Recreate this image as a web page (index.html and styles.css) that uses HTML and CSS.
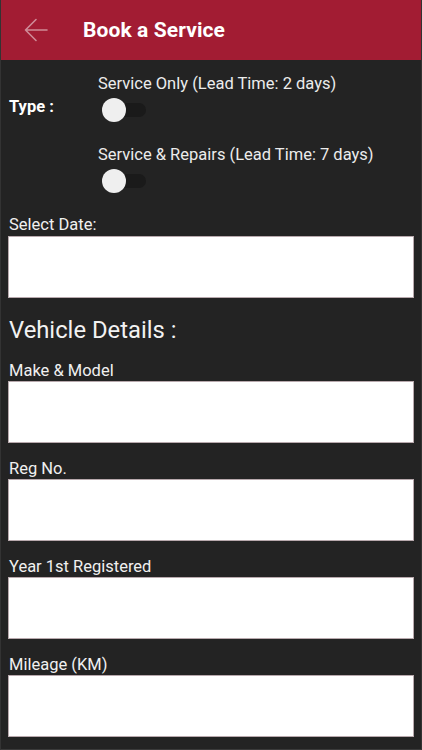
FILE: index.html
```html
<!DOCTYPE html>
<html lang="en">
<head>
<meta charset="utf-8">
<title>Book a Service</title>
<link rel="stylesheet" href="styles.css">
</head>
<body>
<div class="app">
  <header class="topbar">
    <svg class="back" width="24" height="24" viewBox="0 0 24 24" aria-hidden="true">
      <path d="M23 12H1.5M12 1.5L1.5 12L12 22.5" fill="none" stroke="currentColor" stroke-width="1.6" stroke-linecap="round" stroke-linejoin="round"/>
    </svg>
    <h1 class="title">Book a Service</h1>
  </header>

  <main class="content">
    <section class="type-row">
      <div class="type-label">Type :</div>
      <div class="options">
        <div class="option">
          <div class="option-text">Service Only (Lead Time: 2 days)</div>
          <div class="switch"><span class="track"></span><span class="thumb"></span></div>
        </div>
        <div class="option">
          <div class="option-text">Service &amp; Repairs (Lead Time: 7 days)</div>
          <div class="switch"><span class="track"></span><span class="thumb"></span></div>
        </div>
      </div>
    </section>

    <div class="field first">
      <label class="label">Select Date:</label>
      <div class="input"></div>
    </div>

    <h2 class="section-title">Vehicle Details :</h2>

    <div class="field">
      <label class="label">Make &amp; Model</label>
      <div class="input"></div>
    </div>
    <div class="field">
      <label class="label">Reg No.</label>
      <div class="input"></div>
    </div>
    <div class="field">
      <label class="label">Year 1st Registered</label>
      <div class="input"></div>
    </div>
    <div class="field">
      <label class="label">Mileage (KM)</label>
      <div class="input"></div>
    </div>
  </main>
</div>
</body>
</html>
```

FILE: styles.css
```css
html, body {
  margin: 0;
  padding: 0;
  background: #232323;
}

body {
  font-family: Roboto, "Liberation Sans", Arial, sans-serif;
  color: #f2f2f2;
}

.app {
  width: 422px;
  height: 750px;
  overflow: hidden;
  box-sizing: border-box;
  background: #232323;
  border-left: 1px solid #333333;
  border-right: 1px solid #333333;
  border-bottom: 1px solid #3a3a3a;
}

.topbar {
  height: 60px;
  background: #a21c33;
  display: flex;
  align-items: center;
  padding-left: 23px;
}

.back {
  color: #cf8b97;
  flex: none;
}

.title {
  margin: 0 0 0 35px;
  font-size: 21px;
  font-weight: 700;
  color: #ffffff;
  letter-spacing: 0.1px;
}

.content {
  padding: 14px 7px 0 7px;
}

.type-row {
  display: flex;
}

.type-label {
  width: 89px;
  padding-left: 1px;
  margin-top: 23px;
  font-size: 16.5px;
  line-height: 20px;
  font-weight: 700;
  color: #ffffff;
}

.option + .option {
  margin-top: 23px;
}

.option-text {
  font-size: 16.5px;
  line-height: 20px;
  color: #ececec;
}

.switch {
  position: relative;
  width: 48px;
  height: 24px;
  margin-top: 4px;
}

.track {
  position: absolute;
  left: 4px;
  top: 5px;
  width: 44px;
  height: 14px;
  border-radius: 7px;
  background: #1a1a1a;
}

.thumb {
  position: absolute;
  left: 4px;
  top: 0;
  width: 24px;
  height: 24px;
  border-radius: 50%;
  background: #efefef;
}

.field {
  margin-top: 16px;
}

.field.first {
  margin-top: 22px;
}

.label {
  display: block;
  padding-left: 1px;
  font-size: 16.5px;
  line-height: 20px;
  color: #f0f0f0;
}

.input {
  height: 62px;
  box-sizing: border-box;
  background: #ffffff;
  border: 1px solid #b8a9ad;
}

.field.first .input {
  margin-top: 1px;
}

.section-title {
  margin: 19px 0 0 0;
  padding-left: 1px;
  font-size: 23.8px;
  line-height: 26px;
  font-weight: 400;
  color: #f2f2f2;
}

.section-title + .field {
  margin-top: 18px;
}
```
